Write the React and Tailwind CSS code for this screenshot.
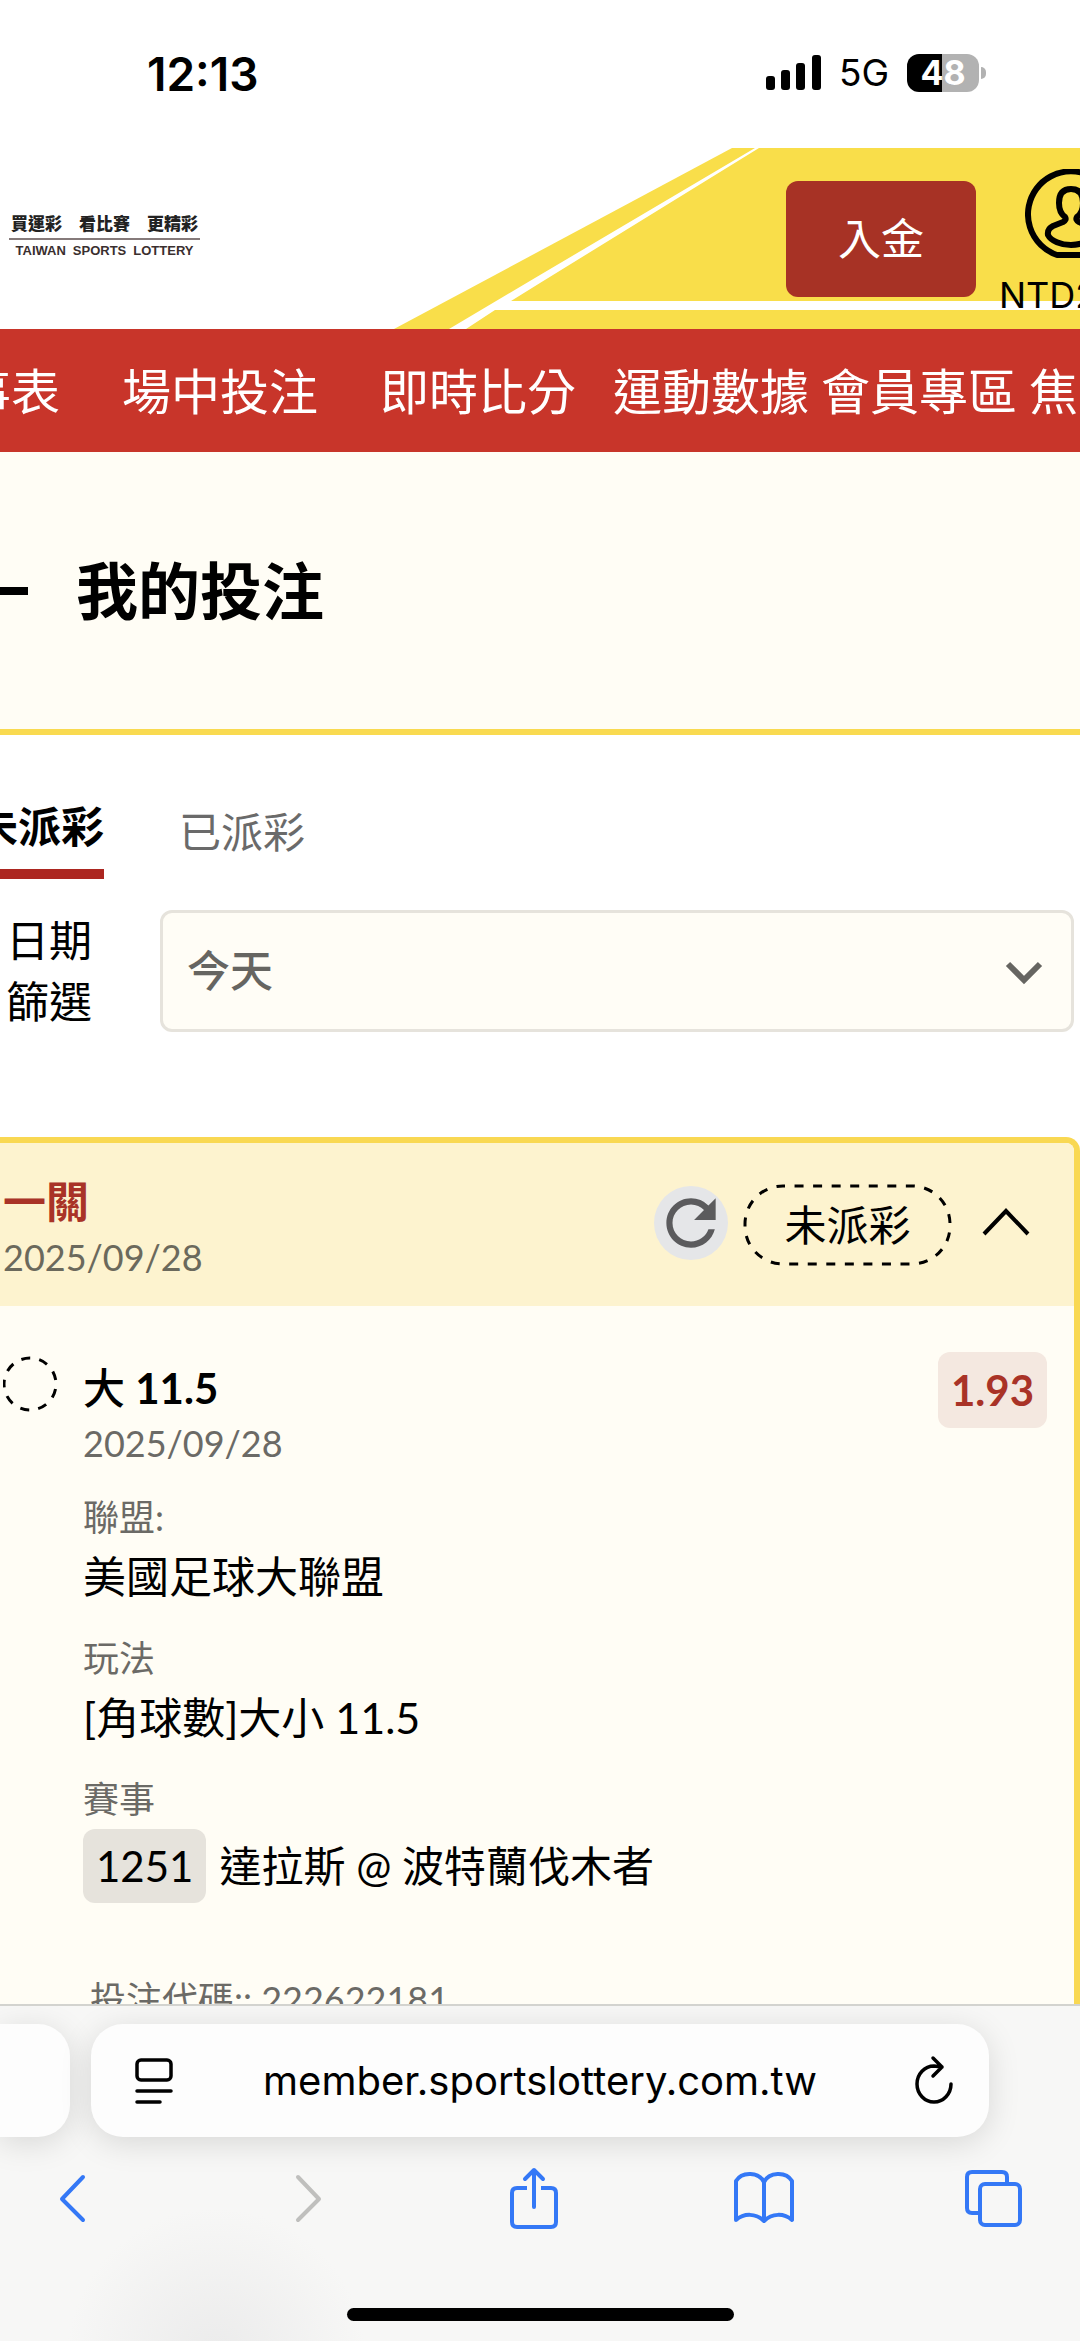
import React, { useState } from 'react';
import { MdRefresh } from 'react-icons/md';

const navItems = [
  { label: '事表', gap: 'mr-[62px]' },
  { label: '場中投注', gap: 'mr-[62px]' },
  { label: '即時比分', gap: 'mr-[37px]' },
  { label: '運動數據', gap: 'mr-3' },
  { label: '會員專區', gap: 'mr-3' },
  { label: '焦', gap: '' },
];

const SignalIcon = () => (
  <svg className="w-[55px] h-[35px]" viewBox="0 0 55 35">
    <rect x="0" y="21" width="9" height="14" rx="3" />
    <rect x="15" y="15" width="9" height="20" rx="3" />
    <rect x="30" y="8" width="9" height="27" rx="3" />
    <rect x="46" y="0" width="9" height="35" rx="3" />
  </svg>
);

const StatusBar = () => (
  <div className="flex h-[148px] shrink-0 items-start justify-between pt-[45px] pl-[147px] pr-[94px] font-['Inter',sans-serif] text-black">
    <span className="text-[46px] leading-[58px] font-semibold">12:13</span>
    <div className="flex h-[55px] items-center gap-[18px]">
      <SignalIcon />
      <span className="text-[37px] leading-[40px]">5G</span>
      <div className="flex items-center gap-[2px]">
        <div className="flex h-[38px] w-[72px] items-center justify-center rounded-[12px] bg-linear-to-r from-black from-49% to-[#b2b2b2] to-49% text-[34px] leading-[38px] font-bold text-white">
          48
        </div>
        <div className="h-[12px] w-[5px] rounded-r-full bg-[#b2b2b2]" />
      </div>
    </div>
  </div>
);

const Logo = () => (
  <a href="#home" className="ml-[9px] mt-[64px] block w-[191px] text-[#222]">
    <span className="flex justify-between px-[2px] pb-[2px] text-[17px] leading-[24px] font-black">
      <span>買運彩</span>
      <span>看比賽</span>
      <span>更精彩</span>
    </span>
    <span className="flex justify-center gap-[7px] border-t-2 border-[#857a7a] pt-[3px] font-['Liberation_Sans',sans-serif] text-[13px] leading-[16px] font-bold text-[#3a2f2f]">
      <span>TAIWAN</span>
      <span>SPORTS</span>
      <span>LOTTERY</span>
    </span>
  </a>
);

const Header = () => (
  <header className="relative flex h-[181px] items-start justify-between overflow-hidden bg-white">
    <svg className="absolute right-0 top-0 h-[181px] w-[686px]" viewBox="0 0 686 181">
      <path fill="#f9de4a" d="M0 181 L338 0 H686 V181 Z" />
      <path fill="#fff" d="M55 181 L146 127 L361 0 H365 L146 135 L117 153 H686 V162 H101 L72 181 Z" />
    </svg>
    <Logo />
    <div className="relative flex w-[294px] shrink-0">
      <button className="mt-[33px] h-[116px] w-[190px] shrink-0 rounded-[12px] bg-[#a73225] text-[43px] text-white">
        入金
      </button>
      <button className="ml-[23px] mt-[21px] block text-left font-['Inter',sans-serif] text-[36px] leading-[44px] text-black">
        <svg
          className="mb-[14px] ml-[26px] h-[90px] w-[92px]"
          viewBox="0 0 92 90"
          fill="none"
          stroke="#000"
          strokeWidth="6"
          strokeLinejoin="round"
        >
          <path d="M32 86 A43 43 0 1 1 60 86 Z" />
          <path d="M46 20 C37 20 34 26 34 34 C34 41 36 45 40 48 Q42 51 38 53 L28 57 Q22 60 23 66 C26 72 36 76 46 76 C56 76 66 72 69 66 Q70 60 64 57 L54 53 Q50 51 52 48 C56 45 58 41 58 34 C58 26 55 20 46 20 Z" />
        </svg>
        NTD2
      </button>
    </div>
  </header>
);

const Nav = () => (
  <nav className="flex h-[123px] items-center overflow-hidden bg-[#c8352a] text-[49px] leading-[64px] whitespace-nowrap text-white">
    <div className="-ml-[38px] flex">
      {navItems.map((item) => (
        <a key={item.label} href="#nav" className={item.gap}>
          {item.label}
        </a>
      ))}
    </div>
  </nav>
);

const Title = () => (
  <div className="flex h-[283px] items-center border-b-6 border-[#f9da50] bg-[#fffdf5]">
    <button aria-label="返回" className="w-[76px]">
      <svg className="h-[8px] w-[28px]" viewBox="0 0 28 8">
        <rect width="28" height="8" />
      </svg>
    </button>
    <h1 className="text-[62px] leading-[80px] font-bold text-black">我的投注</h1>
  </div>
);

const Field = ({ label, children }) => (
  <div className="mb-[21px]">
    <dt className="text-[36px] leading-[60px] text-[#6b6a66]">{label}</dt>
    <dd className="text-[43px] leading-[60px] text-black">{children}</dd>
  </div>
);

const BetCard = () => {
  const [open, setOpen] = useState(true);

  return (
    <section className="mt-[105px] overflow-hidden rounded-tr-[14px] border-t-6 border-r-6 border-[#f9d852] bg-[#fffdf5] pb-10">
      <div className="flex h-[163px] items-start bg-[#fdf3cf] pt-[26px]">
        <div className="flex-1 pl-[3px]">
          <h2 className="text-[43px] leading-[66px] font-bold text-[#a93327]">一關</h2>
          <p className="text-[36px] leading-[44px] text-[#6b695c]">2025/09/28</p>
        </div>
        <button
          aria-label="重新整理"
          className="mt-[17px] flex size-[74px] items-center justify-center rounded-full bg-[#e5e6e8] text-[#5b5b5d]"
        >
          <MdRefresh className="size-[74px]" />
        </button>
        <span className="relative ml-[15px] mt-[15px] flex h-[82px] w-[209px] items-center justify-center text-[42px] text-black">
          <svg className="absolute inset-0 h-full w-full" viewBox="0 0 209 82" fill="none" stroke="#000">
            <rect
              x="2"
              y="2"
              width="205"
              height="78"
              rx="38"
              strokeWidth="3"
              strokeDasharray="9 9.55"
              strokeDashoffset="7"
            />
          </svg>
          未派彩
        </span>
        <button aria-label="收合" className="ml-[29px] mr-[43px] mt-[38px]" onClick={() => setOpen(!open)}>
          <svg className="h-[30px] w-[50px]" viewBox="0 0 50 30" fill="none" stroke="#000" strokeWidth="4">
            <path d="M3 27 L25 4 L47 27" />
          </svg>
        </button>
      </div>

      {open && (
        <div className="pl-[83px] pt-[46px]">
          <div className="-ml-[80px] flex items-start">
            <svg className="mt-[4px] size-[56px] shrink-0" viewBox="0 0 56 56" fill="none" stroke="#000">
              <circle
                cx="27"
                cy="28"
                r="26"
                strokeWidth="3"
                strokeDasharray="9 9.15"
                strokeDashoffset="4.5"
                transform="rotate(180 27 28)"
              />
            </svg>
            <div className="ml-[24px] flex-1">
              <h3 className="pt-[6px] text-[42px] leading-[60px] font-bold text-black">
                <span className="font-medium">大</span> 11.5
              </h3>
              <p className="text-[36px] leading-[50px] text-[#6b6a66]">2025/09/28</p>
            </div>
            <span className="mr-[27px] rounded-[12px] bg-[#f4e8e0] px-[13px] text-[42px] leading-[76px] font-bold text-[#a93327]">
              1.93
            </span>
          </div>
          <dl className="mt-[19px]">
            <Field label="聯盟:">美國足球大聯盟</Field>
            <Field label="玩法">[角球數]大小 11.5</Field>
            <Field label="賽事">
              <div className="flex items-center gap-[13px] text-[42px]">
                <span className="rounded-[12px] bg-[#e6e3dc] px-[13px] leading-[74px]">1251</span>
                <span>達拉斯 @ 波特蘭伐木者</span>
              </div>
            </Field>
          </dl>
          <p className="ml-[7px] mt-[72px] text-[36px] leading-[48px] text-[#6b6a66]">投注代碼:: 222622181</p>
        </div>
      )}
    </section>
  );
};

const Bets = () => {
  const [date, setDate] = useState('today');

  return (
    <div>
      <div className="-ml-[25px] flex h-[144px] items-end gap-[75px]">
        <button className="border-b-10 border-[#ac2620] pb-[10px] text-[43px] leading-[64px] font-bold text-black">
          未派彩
        </button>
        <button className="pb-[15px] text-[42px] leading-[64px] text-[#6a6a6a]">已派彩</button>
      </div>
      <div className="mt-[31px] flex items-center">
        <label htmlFor="date-filter" className="w-[160px] pl-[6px] pr-[60px] text-[43px] leading-[61px] text-black">
          日期篩選
        </label>
        <div className="relative mr-[6px] flex-1">
          <select
            id="date-filter"
            value={date}
            onChange={(e) => setDate(e.target.value)}
            className="h-[122px] w-full appearance-none rounded-[12px] border-3 border-[#e6e3dc] bg-[#fffdf6] pl-[24px] text-[43px] font-medium text-[#666561]"
          >
            <option value="today">今天</option>
          </select>
          <svg
            className="pointer-events-none absolute right-[30px] top-[51px] h-[24px] w-[40px]"
            viewBox="0 0 40 24"
            fill="none"
            stroke="#666561"
            strokeWidth="6"
          >
            <path d="M4 3 L20 19 L36 3" />
          </svg>
        </div>
      </div>
      <BetCard />
    </div>
  );
};

const BrowserBar = () => (
  <footer className="relative h-[337px] shrink-0 overflow-hidden border-t-2 border-[#d3d3cf] bg-[#f7f7f6] bg-radial-[circle_at_20%_105%] from-[#ebebeb] to-[#f7f7f6] to-16%">
    <div className="flex gap-[21px] pt-[18px]">
      <div className="h-[113px] w-[70px] shrink-0 rounded-r-[32px] bg-[#fdfdfd] shadow-[0_6px_32px_rgba(0,0,0,0.13)]" />
      <div className="mr-[91px] flex h-[113px] flex-1 items-center rounded-[32px] bg-[#fdfdfd] pl-[42px] pr-[34px] shadow-[0_6px_32px_rgba(0,0,0,0.13)]">
        <button aria-label="閱讀器">
          <svg
            className="h-[48px] w-[42px]"
            viewBox="0 0 42 48"
            fill="none"
            stroke="#000"
            strokeWidth="3.5"
            strokeLinecap="round"
          >
            <rect x="4" y="3" width="34" height="20" rx="4" />
            <path d="M4 34 H38 M4 45 H27" />
          </svg>
        </button>
        <input
          type="text"
          aria-label="網址"
          readOnly
          value="member.sportslottery.com.tw"
          className="min-w-0 flex-1 pr-2 text-center font-['Inter',sans-serif] text-[40px] text-black"
        />
        <button aria-label="重新載入">
          <svg
            className="h-[52px] w-[42px]"
            viewBox="0 0 42 52"
            fill="none"
            stroke="#000"
            strokeWidth="3.5"
            strokeLinecap="round"
            strokeLinejoin="round"
          >
            <path d="M38 29 A17 18 0 1 1 21 11 L29 12 M20 3 L29 12 L20 21" />
          </svg>
        </button>
      </div>
    </div>
    <div className="mt-[29px] flex items-center justify-between pl-[41px] pr-[54px]">
      <button aria-label="上一頁" className="flex w-[64px] justify-center">
        <svg
          className="h-[60px] w-[40px]"
          viewBox="0 0 40 60"
          fill="none"
          stroke="#3478f6"
          strokeWidth="4"
          strokeLinecap="round"
          strokeLinejoin="round"
        >
          <path d="M30 9 L9 31 L30 52" />
        </svg>
      </button>
      <button aria-label="下一頁" className="flex w-[64px] justify-center">
        <svg
          className="h-[60px] w-[40px]"
          viewBox="0 0 40 60"
          fill="none"
          stroke="#bfbfbd"
          strokeWidth="4"
          strokeLinecap="round"
          strokeLinejoin="round"
        >
          <path d="M15 9 L36 31 L15 52" />
        </svg>
      </button>
      <button aria-label="分享" className="flex w-[64px] justify-center">
        <svg
          className="h-[64px] w-[52px]"
          viewBox="0 0 52 64"
          fill="none"
          stroke="#3478f6"
          strokeWidth="4"
          strokeLinejoin="round"
        >
          <path d="M19 22 H9 Q4 22 4 27 V56 Q4 61 9 61 H43 Q48 61 48 56 V27 Q48 22 43 22 H33" />
          <path strokeLinecap="round" d="M26 41 V4 M17 13 L26 4 L35 13" />
        </svg>
      </button>
      <button aria-label="書籤" className="flex w-[64px] justify-center">
        <svg
          className="h-[60px] w-[64px]"
          viewBox="0 0 64 60"
          fill="none"
          stroke="#3478f6"
          strokeWidth="4"
          strokeLinejoin="round"
        >
          <path d="M32 14 C27 4 10 3 4 13 V52 C12 45 24 45 32 53 C40 45 52 45 60 52 V13 C54 3 37 4 32 14 V53" />
        </svg>
      </button>
      <button aria-label="分頁" className="flex w-[64px] justify-center">
        <svg className="h-[62px] w-[62px]" viewBox="0 0 62 62" fill="none" stroke="#3478f6" strokeWidth="4">
          <path d="M44 16 V10 Q44 5 39 5 H9 Q4 5 4 10 V41 Q4 46 9 46 H16" />
          <rect x="17" y="17" width="40" height="41" rx="5" />
        </svg>
      </button>
    </div>
    <div className="mx-auto mt-[78px] h-[13px] w-[387px] rounded-full bg-black" />
  </footer>
);

const App = () => {
  return (
    <div className="flex h-screen flex-col overflow-hidden bg-white font-['Lato','Noto_Sans_CJK_TC',sans-serif]">
      <StatusBar />
      <main className="min-h-0 flex-1 overflow-hidden">
        <Header />
        <Nav />
        <Title />
        <Bets />
      </main>
      <BrowserBar />
    </div>
  );
};

export default App;
